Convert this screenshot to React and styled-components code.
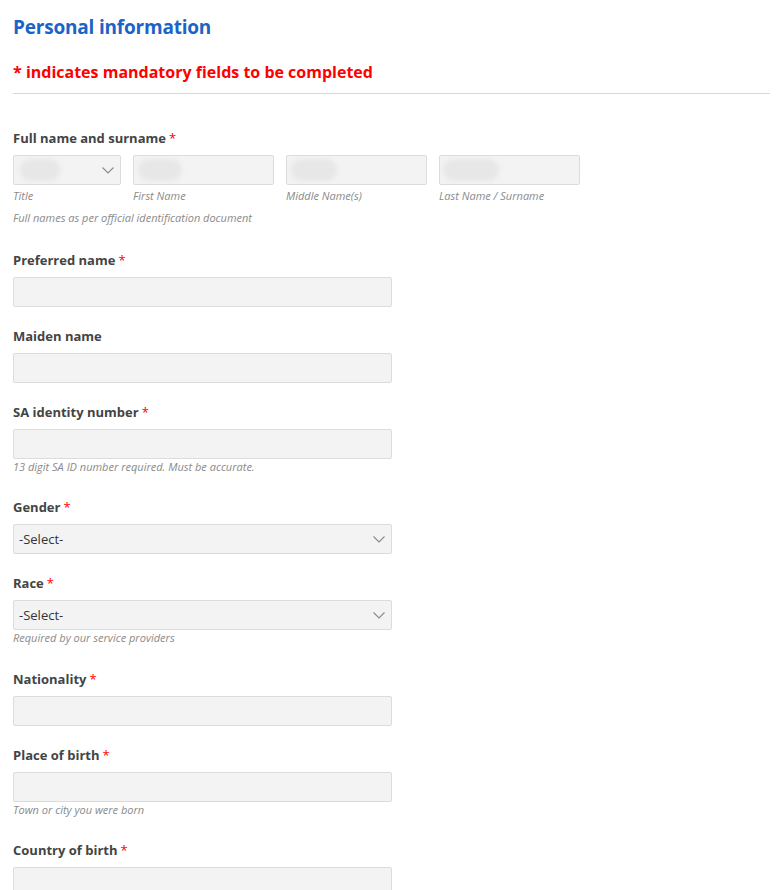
import React from "react";
import styled, { createGlobalStyle } from "styled-components";

const Global = createGlobalStyle`
  html, body { margin: 0; padding: 0; background: #fff; }
  body { font-family: "Open Sans", "Liberation Sans", sans-serif; color: #444; }
`;

const Page = styled.div`
  padding: 13px 10px 0 13px;
`;

const Title = styled.h1`
  margin: 0;
  font-size: 19px;
  line-height: 28px;
  font-weight: 700;
  letter-spacing: -0.2px;
  color: #1a64c8;
`;

const Mandatory = styled.div`
  margin-top: 20px;
  font-size: 16px;
  line-height: 22px;
  font-weight: 700;
  color: #ff0000;
`;

const Divider = styled.hr`
  margin: 10px 0 35px;
  border: 0;
  border-top: 1px solid #d6d6d6;
`;

const Group = styled.div`
  display: flex;
  flex-direction: column;
  margin-bottom: 20px;
  width: ${(p) => p.$width || "379px"};
`;

const Label = styled.div`
  font-size: 13px;
  line-height: 18px;
  font-weight: 700;
  color: #444;
  margin-bottom: 8px;
`;

const Star = styled.span`
  color: #f00;
  font-weight: 400;
  margin-left: 3px;
`;

const Field = styled.div`
  position: relative;
  box-sizing: border-box;
  height: 30px;
  width: ${(p) => p.$w || "100%"};
  background: #f3f3f3;
  border: 1px solid #dcdcdc;
  border-radius: 2px;
  display: flex;
  align-items: center;
  padding: 0 6px 0 5px;
  font-size: 13px;
  color: #333;
  overflow: hidden;
`;

const FieldText = styled.span`
  flex: 1;
`;

const Blob = styled.div`
  position: absolute;
  left: ${(p) => p.$l}px;
  top: 3px;
  width: ${(p) => p.$w}px;
  height: 22px;
  border-radius: 11px;
  background: #e7e7e7;
  filter: blur(2px);
`;

const Hint = styled.div`
  font-size: 11px;
  line-height: 15px;
  font-style: italic;
  color: #8a8a8a;
  margin-bottom: ${(p) => p.$mb ?? 4}px;
  margin-top: ${(p) => p.$mt ?? 0}px;
`;

const NameRow = styled.div`
  display: flex;
  gap: 12px;
`;

const NameCol = styled.div`
  display: flex;
  flex-direction: column;
  width: ${(p) => p.$w}px;
`;

const Chevron = () => (
  <svg width="12" height="7" viewBox="0 0 12 7" fill="none">
    <path d="M0.5 0.5l5.5 5.5 5.5-5.5" stroke="#8a8a8a" strokeWidth="1.1" />
  </svg>
);

const Req = () => <Star>*</Star>;

function TextField({ label, required, hint, hintGap }) {
  return (
    <Group>
      <Label>
        {label}
        {required && <Req />}
      </Label>
      <Field />
      {hint && <Hint $mb={hintGap}>{hint}</Hint>}
    </Group>
  );
}

function SelectField({ label, required, hint, hintGap }) {
  return (
    <Group>
      <Label>
        {label}
        {required && <Req />}
      </Label>
      <Field>
        <FieldText>-Select-</FieldText>
        <Chevron />
      </Field>
      {hint && <Hint $mb={hintGap}>{hint}</Hint>}
    </Group>
  );
}

export default function App() {
  const names = [
    { w: 108, sub: "Title", select: true, blob: [6, 40] },
    { w: 141, sub: "First Name", blob: [4, 44] },
    { w: 141, sub: "Middle Name(s)", blob: [4, 46] },
    { w: 141, sub: "Last Name / Surname", blob: [3, 56] },
  ];
  return (
    <Page>
      <Global />
      <Title>Personal information</Title>
      <Mandatory>* indicates mandatory fields to be completed</Mandatory>
      <Divider />

      <Group $width="auto">
        <Label>
          Full name and surname
          <Req />
        </Label>
        <NameRow>
          {names.map((n) => (
            <NameCol key={n.sub} $w={n.w}>
              <Field>
                <Blob $l={n.blob[0]} $w={n.blob[1]} />
                <FieldText />
                {n.select && <Chevron />}
              </Field>
              <Hint $mt={3} $mb={0}>
                {n.sub}
              </Hint>
            </NameCol>
          ))}
        </NameRow>
        <Hint $mt={7} $mb={6}>
          Full names as per official identification document
        </Hint>
      </Group>

      <TextField label="Preferred name" required />
      <TextField label="Maiden name" />
      <TextField
        label="SA identity number"
        required
        hint="13 digit SA ID number required. Must be accurate."
      />
      <SelectField label="Gender" required />
      <SelectField
        label="Race"
        required
        hint="Required by our service providers"
        hintGap={5}
      />
      <TextField label="Nationality" required />
      <TextField
        label="Place of birth"
        required
        hint="Town or city you were born"
      />
      <TextField label="Country of birth" required />
    </Page>
  );
}
